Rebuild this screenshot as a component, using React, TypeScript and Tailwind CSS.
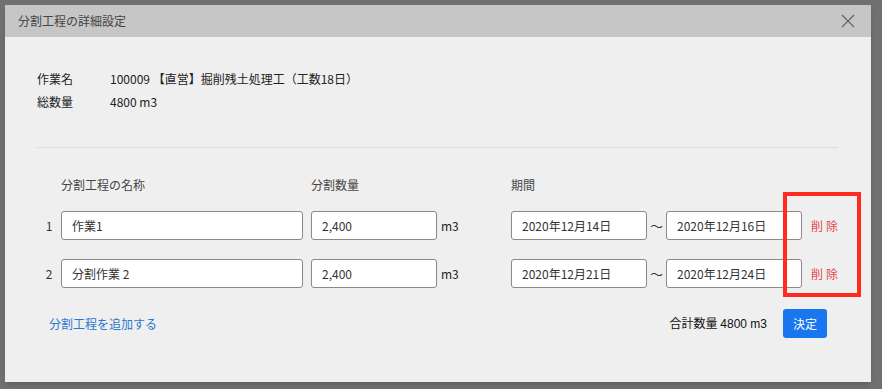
import React from 'react';

const font = { fontFamily: '"Noto Sans CJK JP", "Noto Sans", sans-serif' };

interface Row {
  no: number;
  name: string;
  qty: string;
  from: string;
  to: string;
}

const rows: Row[] = [
  { no: 1, name: '作業1', qty: '2,400', from: '2020年12月14日', to: '2020年12月16日' },
  { no: 2, name: '分割作業 2', qty: '2,400', from: '2020年12月21日', to: '2020年12月24日' },
];

function Field({ value, width }: { value: string; width: string }) {
  return (
    <div
      className={`${width} h-[29px] flex items-center pl-[10px] bg-white border border-[#8a8a8a] rounded-[3px] text-[12px] text-[#333]`}
    >
      {value}
    </div>
  );
}

function SplitRow({ row }: { row: Row }) {
  return (
    <div className="flex items-center h-[29px]">
      <div className="w-[24px] text-center text-[12px] text-[#333]">{row.no}</div>
      <Field value={row.name} width="w-[242px]" />
      <div className="w-[8px]" />
      <Field value={row.qty} width="w-[126px]" />
      <div className="w-[74px] pl-[4px] text-[12px] text-[#222]">m3</div>
      <Field value={row.from} width="w-[136px]" />
      <div className="w-[19px] text-center text-[13px] text-[#333]">～</div>
      <Field value={row.to} width="w-[136px]" />
      <button className="ml-[9px] text-[12px] tracking-[3px] text-[#e0474c]">削除</button>
    </div>
  );
}

export default function App() {
  return (
    <div className="w-[882px] h-[389px] bg-[#707070] p-[5px] overflow-hidden" style={font}>
      <div className="relative w-[866px] h-[377px] bg-[#efefef] flex flex-col shadow-md">
        {/* header */}
        <div className="h-[32px] bg-[#c6c6c6] flex items-center justify-between pl-[13px] pr-[16px]">
          <span className="text-[12px] text-[#444]">分割工程の詳細設定</span>
          <svg width="14" height="14" viewBox="0 0 14 14" className="text-[#666]">
            <path d="M1 1 L13 13 M13 1 L1 13" stroke="currentColor" strokeWidth="1.3" fill="none" />
          </svg>
        </div>

        {/* job info */}
        <div className="pl-[32px] pt-[33px] flex flex-col gap-[5px] text-[12px] text-[#222]">
          <div className="flex h-[18px] items-center">
            <span className="w-[73px]">作業名</span>
            <span>100009 【直営】掘削残土処理工（工数18日）</span>
          </div>
          <div className="flex h-[18px] items-center">
            <span className="w-[73px]">総数量</span>
            <span>4800 m3</span>
          </div>
        </div>

        <div className="ml-[32px] mr-[33px] mt-[36px] border-t border-[#dcdcdc]" />

        {/* column headers */}
        <div className="pl-[32px] mt-[28px] flex items-center h-[18px] text-[12px] text-[#444]">
          <div className="w-[24px]" />
          <div className="w-[250px]">分割工程の名称</div>
          <div className="w-[200px]">分割数量</div>
          <div>期間</div>
        </div>

        <div className="pl-[32px] mt-[17px] flex flex-col gap-[19px]">
          {rows.map((r) => (
            <SplitRow key={r.no} row={r} />
          ))}
        </div>

        {/* footer */}
        <div className="mt-[21px] pl-[44px] pr-[44px] flex items-center justify-between h-[29px]">
          <button className="text-[12px] text-[#2a77d0]">分割工程を追加する</button>
          <div className="flex items-center">
            <span className="text-[12px] text-[#111]">
              合計数量 <span style={{ fontFamily: '"Liberation Sans", Arial, sans-serif' }}>4800 m3</span>
            </span>
            <button className="ml-[16px] w-[44px] h-[29px] rounded-[3px] bg-[#1a76ee] text-white text-[12px]">
              決定
            </button>
          </div>
        </div>

        {/* annotation box */}
        <div className="absolute left-[778px] top-[187px] w-[78px] h-[105px] border-[4px] border-[#ff2b1f]" />
      </div>
    </div>
  );
}
